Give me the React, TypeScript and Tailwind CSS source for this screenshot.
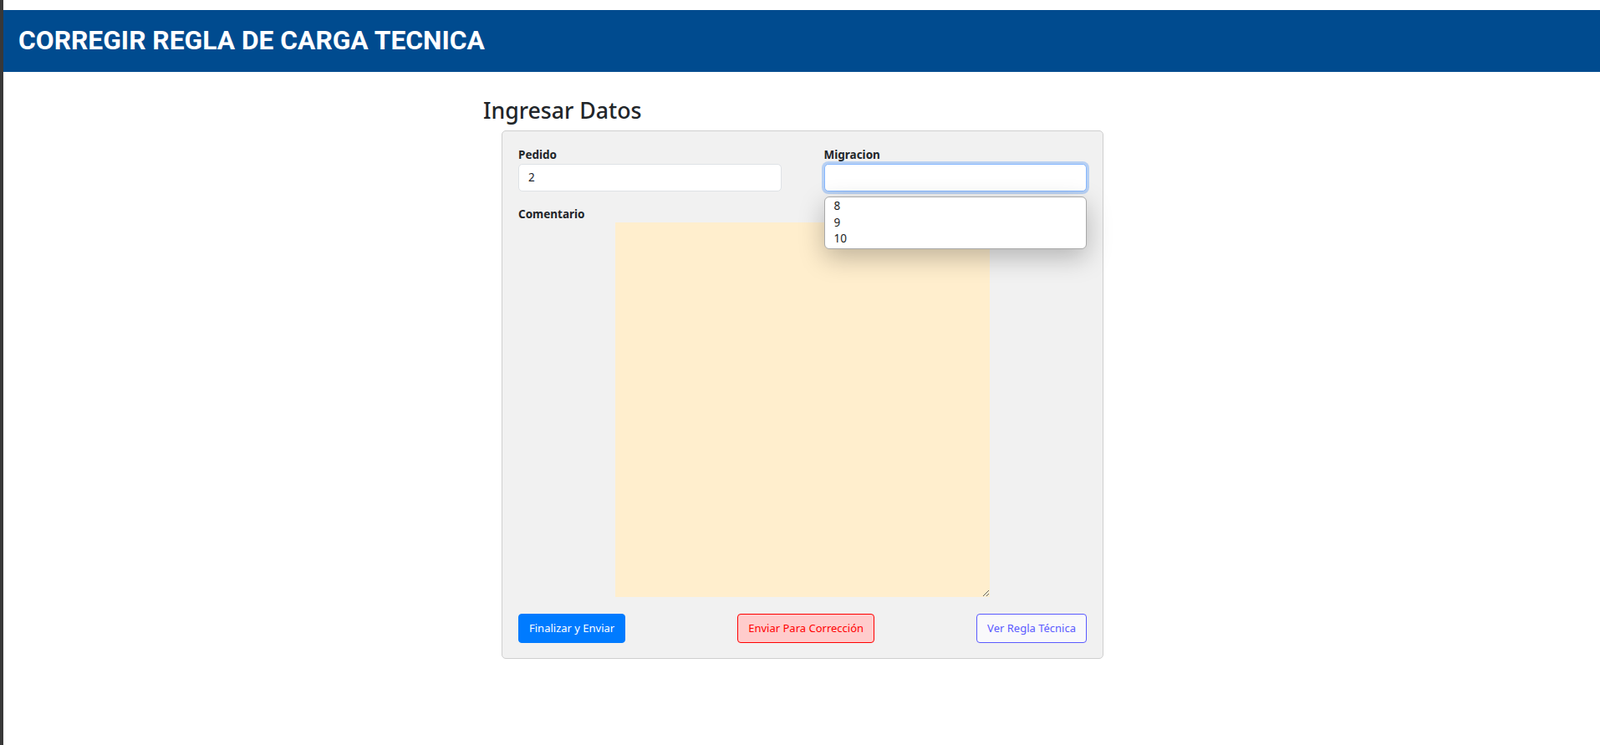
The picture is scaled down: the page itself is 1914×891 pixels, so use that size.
import React, { useState } from 'react';

const opciones = ['8', '9', '10'];

const App: React.FC = () => {
  const [pedido, setPedido] = useState('2');
  const [migracion, setMigracion] = useState('');
  const [comentario, setComentario] = useState('');

  return (
    <div className="min-h-screen flex bg-white font-['Noto_Sans',sans-serif] text-[#212529]">
      <div className="w-[4px] shrink-0 bg-[#383838]"></div>

      <div className="flex-1 pt-[12px]">
        <div className="h-[74px] bg-[#004b8f] flex items-center pl-[18px]">
          <h1 className="font-['Roboto',sans-serif] font-bold text-[31.75px] text-white">
            CORREGIR REGLA DE CARGA TECNICA
          </h1>
        </div>

        <div className="w-[762px] mx-auto pt-[30px]">
          <h3 className="text-[26.7px] font-medium leading-[1.2] mb-[8px]">Ingresar Datos</h3>

          <div className="w-[720px] ml-[22px] bg-[#f1f1f1] border border-[#cfcfcf] rounded-[5px] p-[19px] pb-[18px]">
            <div className="grid grid-cols-2 gap-x-[51px]">
              <div>
                <label className="block text-[13.5px] font-bold leading-[19.5px]">Pedido</label>
                <input
                  type="text"
                  value={pedido}
                  onChange={(e) => setPedido(e.target.value)}
                  className="w-full h-[33px] px-[11px] bg-white border border-[#dee2e6] rounded-[5px] text-[13.5px] outline-none"
                />
              </div>
              <div className="relative">
                <label className="block text-[13.5px] font-bold leading-[19.5px]">Migracion</label>
                <input
                  type="text"
                  value={migracion}
                  onChange={(e) => setMigracion(e.target.value)}
                  className="w-full h-[33px] px-[11px] bg-white border border-[#86b7fe] rounded-[5px] text-[13.5px] outline-none shadow-[0_0_0_3px_rgba(13,110,253,0.25)]"
                />
                <div className="absolute left-0 right-0 top-[59px] z-10 bg-white border border-[#a8a8a8] rounded-[6px] py-[1px] shadow-[0_10px_30px_rgba(0,0,0,0.25)]">
                  {opciones.map((o) => (
                    <div key={o} className="h-[19.5px] leading-[19.5px] pl-[11px] text-[13.5px] text-[#222]">
                      {o}
                    </div>
                  ))}
                </div>
              </div>
            </div>

            <label className="block mt-[18px] text-[13.5px] font-bold leading-[19.5px]">Comentario</label>
            <textarea
              value={comentario}
              onChange={(e) => setComentario(e.target.value)}
              className="block mx-auto w-[448px] h-[448px] bg-[#ffeecd] outline-none border-0 resize"
            />

            <div className="flex justify-between items-center mt-[20px]">
              <button className="h-[35px] px-[12px] rounded-[4px] bg-[#007bff] border border-[#007bff] text-white text-[13px]">
                Finalizar y Enviar
              </button>
              <button className="ml-[12px] h-[35px] px-[12px] rounded-[4px] bg-[#ffcccc] border border-[#ff0000] text-[#ff0000] text-[13px]">
                Enviar Para Corrección
              </button>
              <button className="h-[35px] px-[12px] rounded-[4px] bg-[#f9f9fb] border border-[#5a5aff] text-[#5a5aff] text-[13px]">
                Ver Regla Técnica
              </button>
            </div>
          </div>
        </div>
      </div>
    </div>
  );
};

export default App;
